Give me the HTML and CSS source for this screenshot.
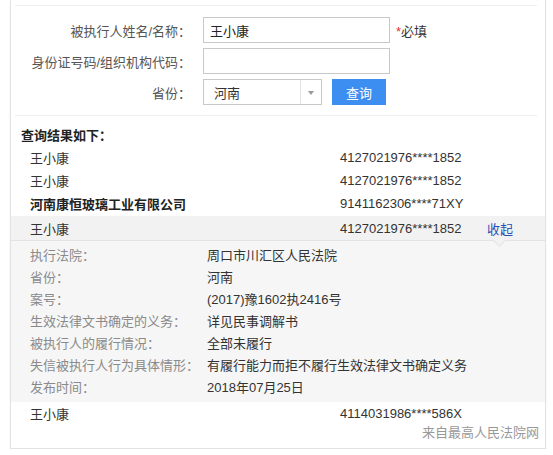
FILE: index.html
```html
<!DOCTYPE html>
<html lang="zh-CN">
<head>
    <meta charset="UTF-8">
    <title>失信被执行人查询</title>
    <link rel="stylesheet" href="styles.css">
</head>
<body>
    <div class="panel">
        <div class="top-line"></div>

        <!-- Search Form -->
        <div class="search-form">
            <div class="form-row">
                <label class="form-label">被执行人姓名/名称：</label>
                <input class="text-input" type="text" value="王小康">
                <span class="required"><i>*</i>必填</span>
            </div>
            <div class="form-row">
                <label class="form-label">身份证号码/组织机构代码：</label>
                <input class="text-input" type="text" value="">
            </div>
            <div class="form-row">
                <label class="form-label">省份：</label>
                <div class="select-box">
                    <span class="select-value">河南</span>
                    <span class="select-arrow"></span>
                </div>
                <button class="search-btn">查询</button>
            </div>
        </div>

        <div class="divider"></div>

        <!-- Results -->
        <div class="results">
            <h3 class="results-title">查询结果如下：</h3>
            <div class="result-row">
                <span class="result-name">王小康</span>
                <span class="result-id">4127021976****1852</span>
            </div>
            <div class="result-row">
                <span class="result-name">王小康</span>
                <span class="result-id">4127021976****1852</span>
            </div>
            <div class="result-row">
                <span class="result-name bold">河南康恒玻璃工业有限公司</span>
                <span class="result-id">9141162306****71XY</span>
            </div>
            <div class="result-row active">
                <span class="result-name">王小康</span>
                <span class="result-id">4127021976****1852</span>
                <a href="#" class="toggle">收起</a>
            </div>
            <div class="detail">
                <span class="detail-caret"></span>
                <div class="detail-row"><span class="detail-label">执行法院：</span><span>周口市川汇区人民法院</span></div>
                <div class="detail-row"><span class="detail-label">省份：</span><span>河南</span></div>
                <div class="detail-row"><span class="detail-label">案号：</span><span>(2017)豫1602执2416号</span></div>
                <div class="detail-row"><span class="detail-label">生效法律文书确定的义务：</span><span>详见民事调解书</span></div>
                <div class="detail-row"><span class="detail-label">被执行人的履行情况：</span><span>全部未履行</span></div>
                <div class="detail-row"><span class="detail-label">失信被执行人行为具体情形：</span><span>有履行能力而拒不履行生效法律文书确定义务</span></div>
                <div class="detail-row"><span class="detail-label">发布时间：</span><span>2018年07月25日</span></div>
            </div>
            <div class="result-row">
                <span class="result-name">王小康</span>
                <span class="result-id">4114031986****586X</span>
            </div>
            <p class="source">来自最高人民法院网</p>
        </div>
    </div>
</body>
</html>
```

FILE: styles.css
```css
/* Page */
body {
    margin: 0;
    padding: 0;
    background: #fff;
    font-family: "Liberation Sans", "Noto Sans CJK SC", sans-serif;
    font-size: 13px;
    color: #333;
}

/* Card */
.panel {
    width: 534px;
    height: 448px;
    margin-left: 10px;
    border: 1px solid #e2e2e2;
    border-top: none;
    box-shadow: 0 1px 2px rgba(0, 0, 0, 0.06);
    background: #fff;
}

.top-line {
    height: 5px;
    margin: 0 8px 0 4px;
    border-bottom: 1px solid #eee;
}

/* Form */
.search-form {
    display: flex;
    flex-direction: column;
    gap: 5px;
    padding-top: 11px;
}

.form-row {
    display: flex;
    align-items: center;
    height: 26px;
}

.form-label {
    width: 180px;
    padding-right: 12px;
    text-align: right;
    color: #555;
}

.text-input {
    box-sizing: border-box;
    width: 187px;
    height: 26px;
    padding: 0 6px;
    border: 1px solid #c9c9c9;
    font-family: inherit;
    font-size: 13px;
    color: #222;
    outline: none;
}

.required {
    margin-left: 6px;
    color: #333;
}

.required i {
    font-style: normal;
    color: #d33;
}

.select-box {
    box-sizing: border-box;
    display: flex;
    align-items: center;
    width: 119px;
    height: 26px;
    border: 1px solid #c9c9c9;
}

.select-value {
    flex: 1;
    padding-left: 10px;
}

.select-arrow {
    position: relative;
    width: 20px;
    height: 100%;
    border-left: 1px solid #e2e2e2;
}

.select-arrow::after {
    content: "";
    position: absolute;
    left: 7px;
    top: 11px;
    border-left: 3px solid transparent;
    border-right: 3px solid transparent;
    border-top: 4px solid #999;
}

.search-btn {
    width: 54px;
    height: 26px;
    margin-left: 10px;
    border: none;
    background: #3c8ef0;
    color: #fff;
    font-family: inherit;
    font-size: 13px;
}

.divider {
    margin: 10px 8px 0 4px;
    border-top: 1px solid #eee;
}

/* Results */
.results-title {
    margin: 0;
    padding: 10px 0 0 10px;
    height: 20px;
    line-height: 20px;
    font-size: 13px;
    font-weight: bold;
    color: #222;
}

.result-row {
    display: flex;
    align-items: center;
    height: 23px;
    padding-left: 19px;
}

.result-row.active {
    height: 24px;
    margin-top: 1px;
    background: #f2f2f2;
}

.result-name {
    width: 310px;
}

.result-name.bold {
    font-weight: bold;
    color: #222;
}

.result-id {
    width: 147px;
}

.toggle {
    color: #2b4fb8;
    text-decoration: none;
}

/* Detail */
.detail {
    position: relative;
    padding: 4px 0 3px 19px;
    border-top: 1px solid #e3e3e3;
    background: #f6f6f6;
}

.detail-caret {
    position: absolute;
    top: -5px;
    left: 484px;
    width: 8px;
    height: 8px;
    background: #f2f2f2;
    border-right: 1px solid #e3e3e3;
    border-bottom: 1px solid #e3e3e3;
    transform: rotate(45deg);
}

.detail-row {
    display: flex;
    height: 22px;
    line-height: 22px;
}

.detail-label {
    width: 177px;
    color: #8a8a8a;
}

.source {
    margin: 0;
    padding-right: 6px;
    text-align: right;
    line-height: 16px;
    color: #999;
}
```
